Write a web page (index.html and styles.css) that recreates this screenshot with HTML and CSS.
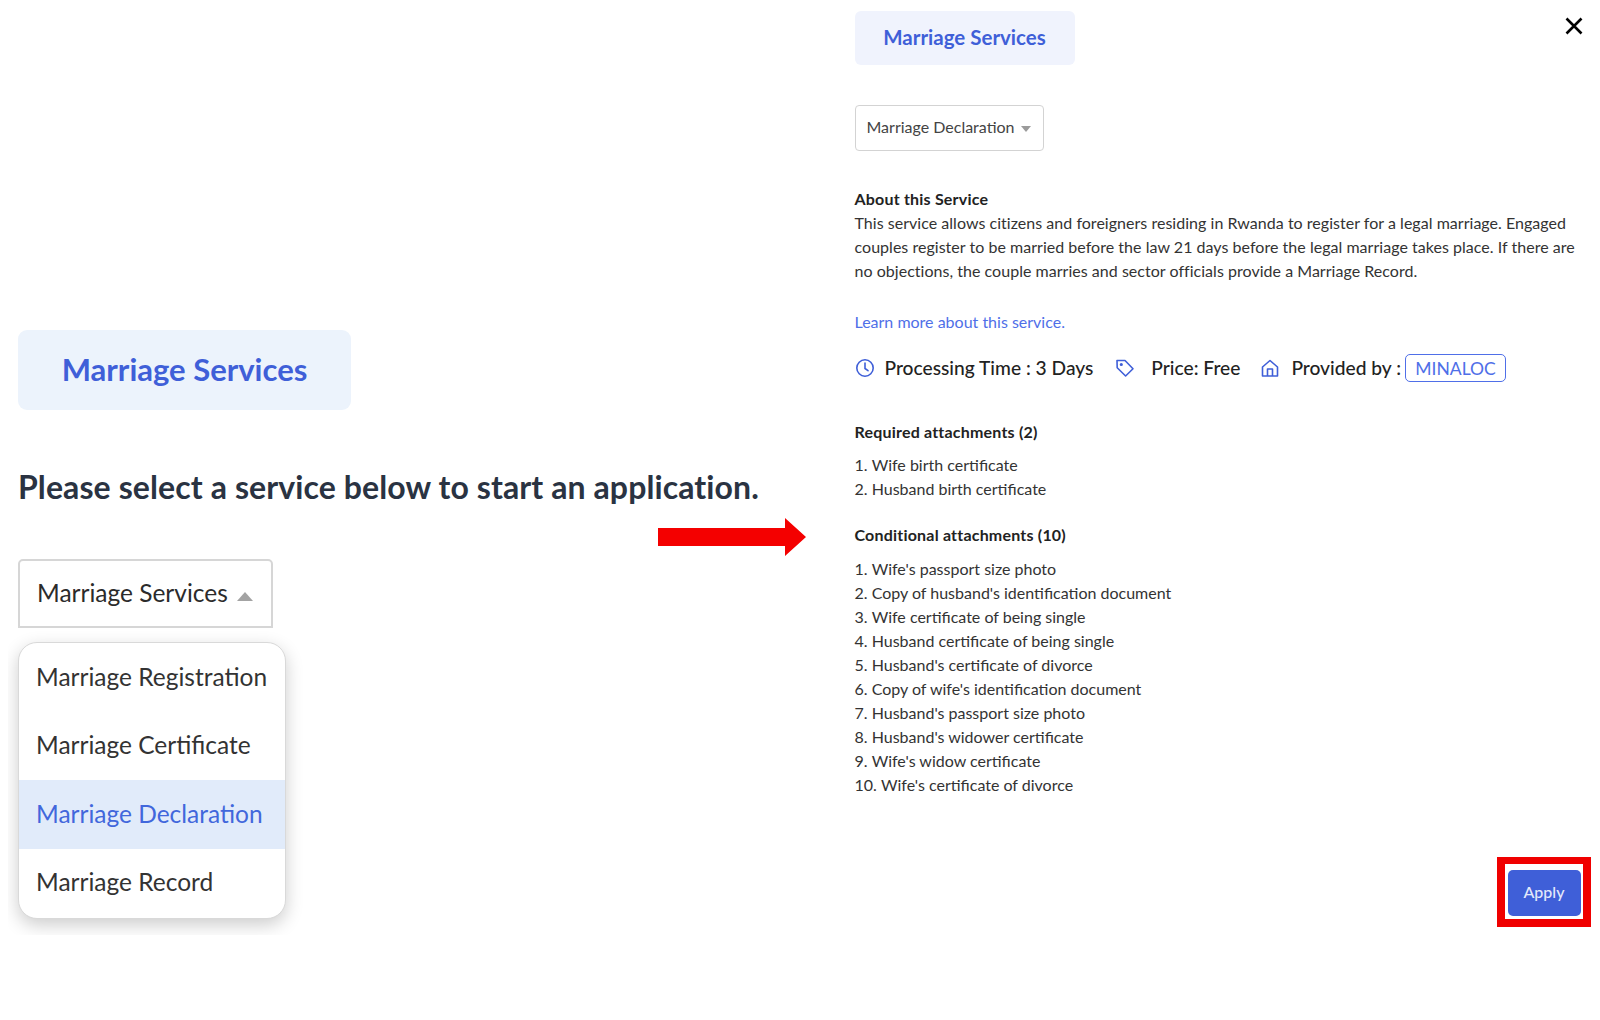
FILE: index.html
```html
<!DOCTYPE html>
<html lang="en">
<head>
<meta charset="utf-8">
<title>Marriage Services</title>
<link rel="stylesheet" href="styles.css">
</head>
<body>
<main class="page">
  <section class="left">
    <div class="chip-lg">Marriage Services</div>
    <h1 class="prompt">Please select a service below to start an application.</h1>
    <div class="select-lg">Marriage Services <span class="caret-up"></span></div>
    <div class="menu-clip">
      <ul class="menu">
        <li>Marriage Registration</li>
        <li>Marriage Certificate</li>
        <li class="active">Marriage Declaration</li>
        <li>Marriage Record</li>
      </ul>
    </div>
  </section>
  <div class="arrow-col">
    <svg class="arrow" width="150" height="40" viewBox="0 0 150 40"><path d="M0 11H127V1L148 20 127 39V29H0Z" fill="#f40000"/></svg>
  </div>
  <section class="right">
    <div class="chip-sm">Marriage Services</div>
    <div class="select-sm">Marriage Declaration <span class="caret-down"></span></div>
    <h2 class="about-title">About this Service</h2>
    <p class="about">This service allows citizens and foreigners residing in Rwanda to register for a legal marriage. Engaged couples register to be married before the law 21 days before the legal marriage takes place. If there are no objections, the couple marries and sector officials provide a Marriage Record.</p>
    <a class="learn" href="#">Learn more about this service.</a>
    <div class="meta">
      <svg class="ico" width="20" height="20" viewBox="0 0 20 20" fill="none" stroke="#3f5fd8" stroke-width="1.6"><circle cx="10" cy="10" r="8.2"/><path d="M10 5v5.5l3 2.2" stroke-linecap="round"/></svg>
      <span class="m-time">Processing Time : 3 Days</span>
      <svg class="ico" width="20" height="20" viewBox="0 0 20 20" fill="none" stroke="#3f5fd8" stroke-width="1.6" stroke-linejoin="round"><path d="M2 2.5h8l8 8.2-7.4 7.3L2.2 9.7Z"/><circle cx="6.3" cy="6.5" r=".8"/></svg>
      <span class="m-price">Price: Free</span>
      <svg class="ico" width="20" height="20" viewBox="0 0 20 20" fill="none" stroke="#3f5fd8" stroke-width="1.6" stroke-linejoin="round"><path d="M2.5 9 10 2.5 17.5 9v9h-15Z"/><path d="M7.5 18v-7h5v7"/></svg>
      <span class="m-prov">Provided by :</span>
      <span class="tag">MINALOC</span>
    </div>
    <h3 class="att-title first">Required attachments (2)</h3>
    <ol class="att">
      <li>Wife birth certificate</li>
      <li>Husband birth certificate</li>
    </ol>
    <h3 class="att-title second">Conditional attachments (10)</h3>
    <ol class="att att-long">
      <li>Wife's passport size photo</li>
      <li>Copy of husband's identification document</li>
      <li>Wife certificate of being single</li>
      <li>Husband certificate of being single</li>
      <li>Husband's certificate of divorce</li>
      <li>Copy of wife's identification document</li>
      <li>Husband's passport size photo</li>
      <li>Husband's widower certificate</li>
      <li>Wife's widow certificate</li>
      <li>Wife's certificate of divorce</li>
    </ol>
    <div class="apply-row">
      <div class="apply-mark"><button class="apply">Apply</button></div>
    </div>
  </section>
  <button class="close" aria-label="Close"><svg width="18" height="18" viewBox="0 0 18 18" fill="none" stroke="#000" stroke-width="2.6"><path d="M1.5 1.5l15 15M16.5 1.5l-15 15"/></svg></button>
</main>
</body>
</html>
```
FILE: styles.css
```css
* { box-sizing: border-box; }
html, body { margin: 0; padding: 0; background: #fff; }
body { font-family: Lato, "Noto Sans", sans-serif; color: #2f3542; }
.page { position: relative; width: 1600px; height: 1020px; display: flex; overflow: hidden; }
.left { width: 658px; flex: none; padding: 330px 0 0 18px; display: flex; flex-direction: column; align-items: flex-start; }
.chip-lg { width: 333px; height: 80px; padding-bottom: 3px; background: #ecf3fc; border-radius: 9px; color: #3f5fd8; font-size: 31px; font-weight: 700; display: flex; align-items: center; justify-content: center; }
.prompt { margin: 56px 0 0 0; font-size: 32px; line-height: 42px; font-weight: 700; letter-spacing: .1px; color: #2a3342; white-space: nowrap; }
.select-lg { margin-top: 51px; width: 255px; height: 69px; border: 2px solid #d6d6d6; border-radius: 5px 5px 0 0; padding: 0 0 3px 17px; display: flex; align-items: center; font-size: 24.5px; color: #2b2b2b; white-space: pre; }
.caret-up { margin: 9px 0 0 3px; border: 8px solid transparent; border-top: 0; border-bottom: 9px solid #a3a3a3; }
.menu-clip { margin: 0 0 0 -10px; padding: 14px 14px 16px 10px; width: 300px; overflow: hidden; }
.menu { list-style: none; margin: 0; padding: 0; width: 268px; height: 277px; background: #fff; border: 1px solid #d9d9d9; border-radius: 19px; overflow: hidden; box-shadow: 0 6px 18px rgba(0,0,0,.2); font-size: 24.5px; color: #333; }
.menu li { height: 68.5px; padding: 0 0 2px 17px; display: flex; align-items: center; white-space: nowrap; }
.menu li.active { background: #e1ebfa; color: #4167dc; }
.arrow-col { flex: none; width: 196.5px; padding-top: 517px; }
.arrow { display: block; }
.right { flex: 1; min-width: 0; padding: 11px 9px 0 0; display: flex; flex-direction: column; align-items: flex-start; font-size: 16px; color: #333; }
.chip-sm { width: 220px; height: 54px; padding-bottom: 2px; background: #f0f3fd; border-radius: 6px; color: #3f5fd8; font-size: 20.5px; font-weight: 700; display: flex; align-items: center; justify-content: center; }
.select-sm { margin-top: 40px; width: 189px; height: 46px; border: 1.5px solid #d3d3d3; border-radius: 4px; padding: 0 0 3px 11px; display: flex; align-items: center; font-size: 16px; color: #444; white-space: pre; }
.caret-down { margin: 4px 0 0 2px; border: 5.5px solid transparent; border-bottom: 0; border-top: 6px solid #9b9b9b; }
.about-title { margin: 36px 0 0; font-size: 16px; line-height: 24px; font-weight: 700; letter-spacing: .2px; color: #222; }
.about { margin: 0; font-size: 16px; line-height: 24px; letter-spacing: .03px; color: #333; }
.learn { margin-top: 27px; line-height: 24px; color: #4f6fe8; text-decoration: none; }
.meta { margin-top: 19px; height: 30px; display: flex; align-items: center; font-size: 19.2px; font-weight: 500; color: #222; white-space: nowrap; }
.ico { flex: none; }
.m-time { margin: 0 22px 2px 10px; }
.m-price { margin: 0 20px 2px 16px; }
.m-prov { margin: 0 4px 2px 11px; }
.tag { height: 28px; width: 101px; border: 1px solid #4f6fe8; border-radius: 5px; color: #4f6fe8; font-size: 17.5px; font-weight: 400; display: flex; align-items: center; justify-content: center; }
.att-title { margin: 0; font-size: 16px; line-height: 24px; font-weight: 700; letter-spacing: .2px; color: #222; }
.att-title.first { margin-top: 37px; }
.att-title.second { margin-top: 22px; }
.att { margin: 9px 0 0; padding: 0; list-style-position: inside; line-height: 24px; }
.att-long { margin-top: 10px; }
.apply-row { align-self: flex-end; margin-top: 60px; }
.apply-mark { width: 94px; height: 70px; border: solid #f00000; border-width: 7px 8px 8px; display: flex; align-items: flex-start; justify-content: center; padding-top: 6px; }
.apply { width: 73px; height: 46px; padding: 0 0 3px; border: 0; border-radius: 5px; background: #3f5fd8; color: #e4e9fb; font: 500 16px Lato, "Noto Sans", sans-serif; }
.close { position: absolute; left: 1565px; top: 17px; width: 18px; height: 18px; padding: 0; border: 0; background: none; line-height: 0; }
```
